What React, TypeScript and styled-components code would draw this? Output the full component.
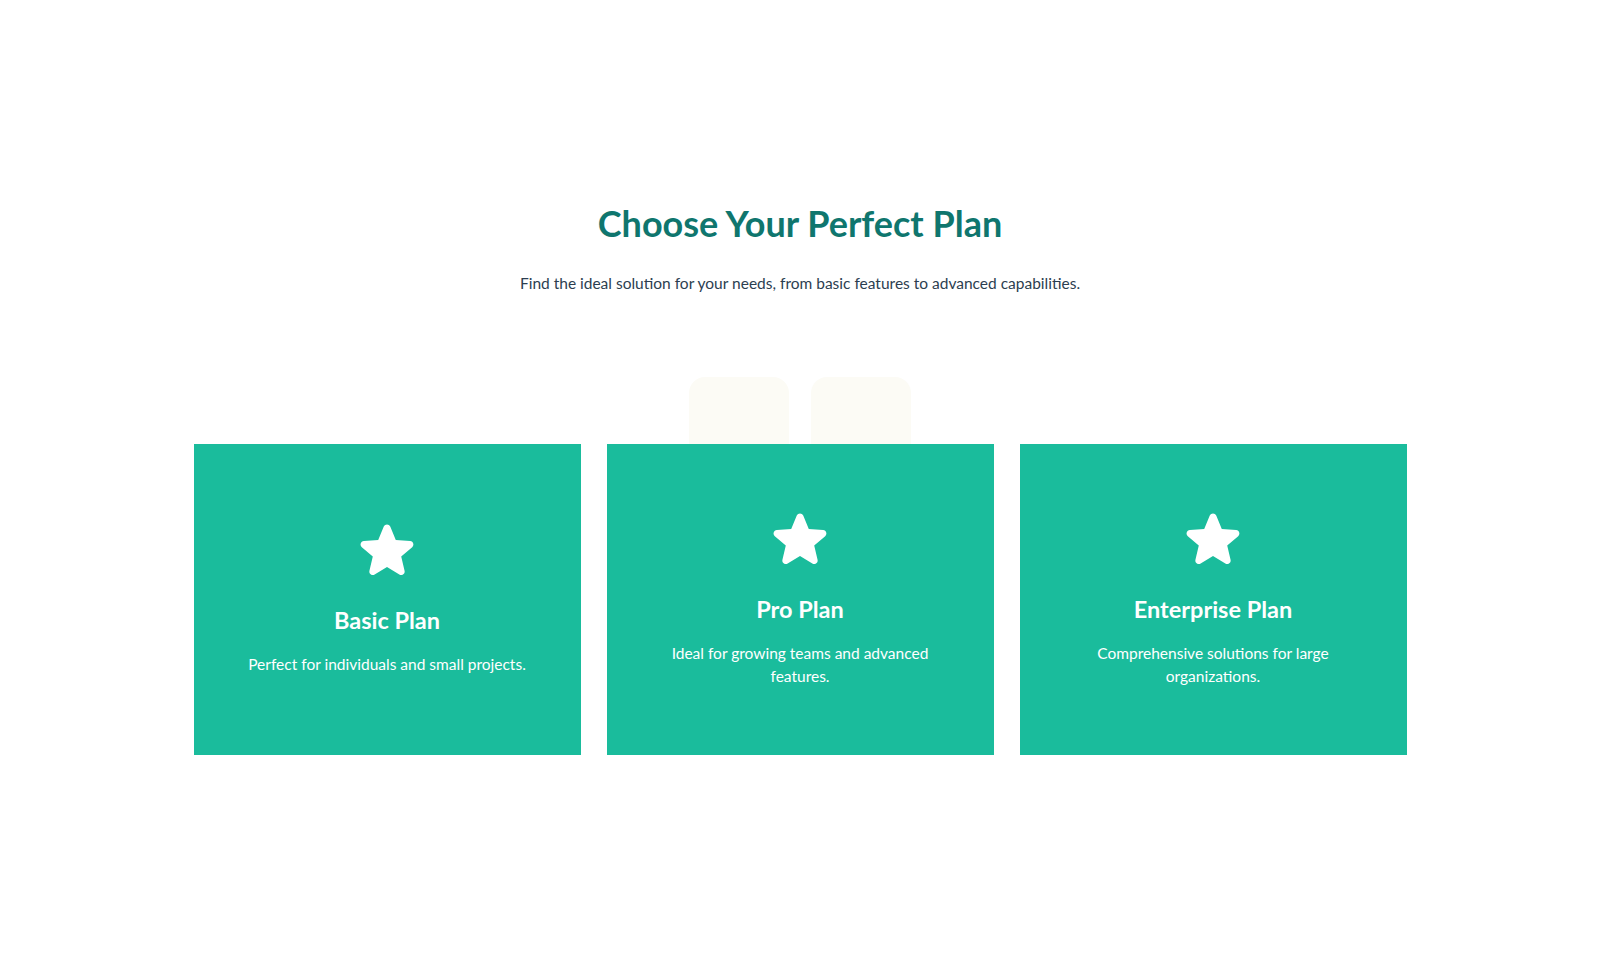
import React from "react";
import styled, { createGlobalStyle } from "styled-components";

const GlobalStyle = createGlobalStyle`
  html, body {
    margin: 0;
    padding: 0;
    background: #ffffff;
  }
  body {
    font-family: "Lato", "Noto Sans", sans-serif;
    -webkit-font-smoothing: antialiased;
  }
  * { box-sizing: border-box; }
`;

const Section = styled.section`
  display: flex;
  flex-direction: column;
  align-items: center;
  padding: 203px 0 120px;
`;

const Title = styled.h1`
  margin: 0;
  font-size: 36px;
  line-height: 40px;
  font-weight: 700;
  color: #0f766e;
  text-align: center;
`;

const Subtitle = styled.p`
  margin: 28px 0 0;
  font-size: 15.5px;
  line-height: 24px;
  font-weight: 400;
  color: #2c3e50;
  text-align: center;
`;

const TabRow = styled.div`
  display: flex;
  gap: 22px;
  margin-top: 82px;
  height: 67px;
`;

const Tab = styled.div`
  width: 100px;
  height: 100%;
  border-radius: 16px 16px 0 0;
  background: #fcfbf5;
`;

const Grid = styled.div`
  display: grid;
  grid-template-columns: repeat(3, 387px);
  gap: 26px;
`;

const Card = styled.div`
  height: 311px;
  background: #1abc9c;
  color: #ffffff;
  display: flex;
  flex-direction: column;
  align-items: center;
  justify-content: center;
  padding: 0 40px 5px;
  text-align: center;
`;

const StarIcon = styled.svg`
  width: 64px;
  height: 64px;
  display: block;
  fill: #ffffff;
`;

const CardTitle = styled.h3`
  margin: 24px 0 0;
  font-size: 23.5px;
  line-height: 28px;
  font-weight: 700;
`;

const CardText = styled.p`
  margin: 19px 0 0;
  font-size: 15.5px;
  line-height: 22.4px;
  font-weight: 400;
`;

const Star = () => (
  <StarIcon viewBox="0 0 24 24" aria-hidden="true">
    <path d="M10.788 3.21c.448-1.077 1.976-1.077 2.424 0l2.082 5.006 5.404.434c1.164.093 1.636 1.545.749 2.305l-4.117 3.527 1.257 5.273c.271 1.136-.964 2.033-1.960 1.425L12 18.354 7.373 21.18c-.996.608-2.231-.29-1.96-1.425l1.257-5.273-4.117-3.527c-.887-.76-.415-2.212.749-2.305l5.404-.434 2.082-5.005Z" />
  </StarIcon>
);

const plans = [
  { name: "Basic Plan", text: "Perfect for individuals and small projects." },
  { name: "Pro Plan", text: "Ideal for growing teams and advanced features." },
  { name: "Enterprise Plan", text: "Comprehensive solutions for large organizations." },
];

export default function App() {
  return (
    <>
      <GlobalStyle />
      <Section>
        <Title>Choose Your Perfect Plan</Title>
        <Subtitle>
          Find the ideal solution for your needs, from basic features to advanced capabilities.
        </Subtitle>
        <TabRow>
          <Tab />
          <Tab />
        </TabRow>
        <Grid>
          {plans.map((p) => (
            <Card key={p.name}>
              <Star />
              <CardTitle>{p.name}</CardTitle>
              <CardText>{p.text}</CardText>
            </Card>
          ))}
        </Grid>
      </Section>
    </>
  );
}
